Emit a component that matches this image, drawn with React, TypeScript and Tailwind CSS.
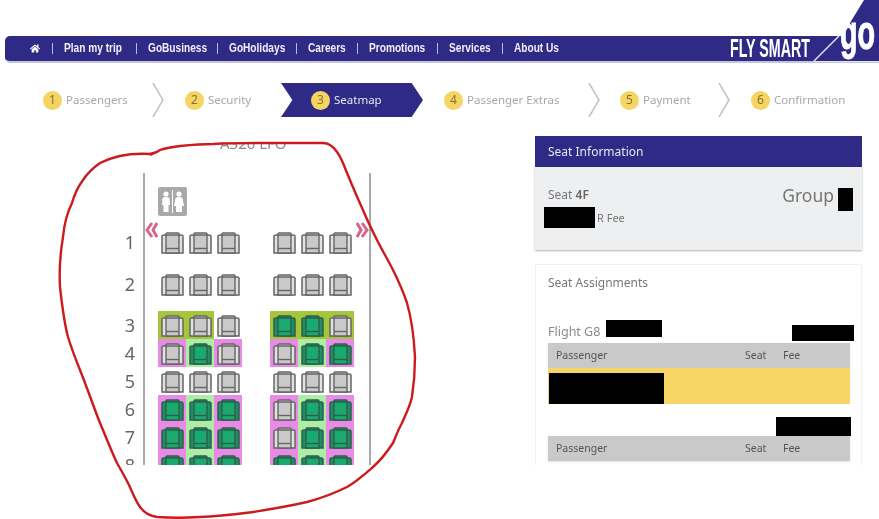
import React from "react";
import { FaHome } from "react-icons/fa";

const NAV = [
  { t: "Plan my trip", w: "w-[60px]" },
  { t: "GoBusiness", w: "w-[57px]" },
  { t: "GoHolidays", w: "w-[55px]" },
  { t: "Careers", w: "w-[37px]" },
  { t: "Promotions", w: "w-[56px]" },
  { t: "Services", w: "w-[41px]" },
  { t: "About Us", w: "w-[45px]" },
];

function Chevron() {
  return (
    <svg width="12" height="34" viewBox="0 0 12 34" className="shrink-0 blur-[0.4px]">
      <polyline points="1,0 11,17 1,34" fill="none" stroke="#c4c4c4" strokeWidth="1.6" />
    </svg>
  );
}

function Step({ n, label, active }: { n: number; label: string; active?: boolean }) {
  return (
    <div className="flex items-center gap-[4px] blur-[0.4px]">
      <div className="w-[19px] h-[19px] rounded-full bg-[#f4d462] flex items-center justify-center text-[12px] text-[#85722c] leading-none">
        {n}
      </div>
      <span className={active ? "text-[11.5px] text-[#e4e4f2] whitespace-nowrap" : "text-[11.5px] text-[#a8a8a8] whitespace-nowrap"}>
        {label}
      </span>
    </div>
  );
}

function Seat({ green }: { green?: boolean }) {
  const arm = green ? "#1f8f63" : "#e2e2e2";
  const stroke = green ? "#2f5f4c" : "#666666";
  const inner = green ? "#1aa96f" : "#c9c9c9";
  return (
    <svg width="23" height="22" viewBox="0 0 23 22" className="block blur-[0.3px]">
      <path d="M1 4 Q1 3 3 3 H5 V2 Q5 1 6 1 H17 Q18 1 18 2 V3 H20 Q22 3 22 4 V21 H1 Z" fill={arm} stroke={stroke} strokeWidth="1.5" />
      <path d="M5 3 H18 V21 H5 Z" fill={inner} stroke={stroke} strokeWidth="1.4" />
      <path d="M5 16.5 H18" stroke={stroke} strokeWidth="1.4" fill="none" />
    </svg>
  );
}

type Cell = { bg?: "o" | "p" | "l"; g?: boolean };

function SeatCell({ bg, g }: Cell) {
  const cls =
    bg === "o" ? "bg-[#a5c63b]" : bg === "p" ? "bg-[#e98ae6]" : bg === "l" ? "bg-[#aeeda6]" : "";
  return (
    <div className={`w-[28px] h-[28px] pt-[4px] pl-[3px] ${cls}`}>
      <Seat green={g} />
    </div>
  );
}

const none: Cell = {};
const PG: Cell = { bg: "p", g: true };
const PN: Cell = { bg: "p" };
const LG: Cell = { bg: "l", g: true };
const ON: Cell = { bg: "o" };
const OG: Cell = { bg: "o", g: true };

const ROWS: { n: number; cls: string; cells: Cell[] }[] = [
  { n: 1, cls: "mt-0", cells: [none, none, none, none, none, none] },
  { n: 2, cls: "mt-[14px]", cells: [none, none, none, none, none, none] },
  { n: 3, cls: "mt-[13px]", cells: [ON, ON, none, OG, OG, ON] },
  { n: 4, cls: "mt-0", cells: [PN, LG, PN, PN, LG, PG] },
  { n: 5, cls: "mt-0", cells: [none, none, none, none, none, none] },
  { n: 6, cls: "mt-0", cells: [PG, LG, PG, PN, LG, PG] },
  { n: 7, cls: "mt-0", cells: [PG, LG, PG, PN, LG, PG] },
  { n: 8, cls: "mt-0", cells: [PG, LG, PG, PG, LG, PG] },
];

function Lavatory() {
  return (
    <svg width="29" height="29" viewBox="0 0 29 29" className="block blur-[0.5px]">
      <rect width="29" height="29" rx="2" fill="#a9a9a9" />
      <line x1="14.5" y1="3" x2="14.5" y2="26" stroke="#ffffff" strokeWidth="1" />
      <circle cx="8" cy="7" r="2.6" fill="#fff" />
      <path d="M4.5 11 Q8 9 11.5 11 L12 18 H10.5 V25 H5.5 V18 H4 Z" fill="#fff" />
      <circle cx="21" cy="7" r="2.6" fill="#fff" />
      <path d="M17.5 11 Q21 9 24.5 11 L26 19 H24 V25 H18 V19 H16 Z" fill="#fff" />
    </svg>
  );
}

function Arrows({ right }: { right?: boolean }) {
  return (
    <svg width="13" height="16" viewBox="0 0 13 16" className={right ? "absolute left-[211px] top-[49px]" : "absolute left-[0px] top-[49px]"}>
      {right ? (
        <path d="M1 1 L5 8 L1 15 M6 1 L11 8 L6 15" fill="none" stroke="#d8648a" strokeWidth="3" />
      ) : (
        <path d="M7 1 L2 8 L7 15 M12 1 L8 8 L12 15" fill="none" stroke="#d8648a" strokeWidth="3" />
      )}
    </svg>
  );
}

function TableHead() {
  return (
    <div className="h-[25px] w-[302px] bg-[#c9c9c9] flex items-center text-[10.5px] text-[#555555] shadow-[0_1px_2px_rgba(0,0,0,0.12)]">
      <span className="ml-[8px] w-[189px] blur-[0.3px]">Passenger</span>
      <span className="w-[38px] blur-[0.3px]">Seat</span>
      <span className="blur-[0.3px]">Fee</span>
    </div>
  );
}

export default function App() {
  return (
    <div className="relative w-[879px] h-[519px] bg-white overflow-hidden font-['Noto_Sans',sans-serif]">
      <header className="pt-[36px] pl-[5px]">
        <nav className="h-[27px] rounded-l-[5px] bg-[#2f2a86] border-b-2 border-[#c5c4dc] flex items-center pl-[25px] gap-[11.5px] font-['Liberation_Sans',sans-serif] font-bold text-[13.5px] text-[#f0f0fa]">
          <FaHome className="w-[10px] h-[11px] text-white" />
          {NAV.map((n) => (
            <React.Fragment key={n.t}>
              <span className="w-px h-[11px] bg-[#bdbce0]" />
              <span className={`${n.w} shrink-0 blur-[0.4px]`}>
                <span className="block origin-left scale-x-[0.75] whitespace-nowrap">{n.t}</span>
              </span>
            </React.Fragment>
          ))}
        </nav>
      </header>

      <div className="mt-[20px] h-[34px] flex items-center">
        <div className="w-[152px] pl-[43px] shrink-0"><Step n={1} label="Passengers" /></div>
        <Chevron />
        <div className="w-[117px] pl-[21px] shrink-0"><Step n={2} label="Security" /></div>
        <div className="w-[142px] h-[34px] pl-[30px] shrink-0 flex items-center bg-[#2f2a86] [clip-path:polygon(0_0,92%_0,100%_50%,92%_100%,0_100%,8%_50%)]">
          <Step n={3} label="Seatmap" active />
        </div>
        <div className="w-[165px] pl-[21px] shrink-0"><Step n={4} label="Passenger Extras" /></div>
        <Chevron />
        <div className="w-[118px] pl-[20px] shrink-0"><Step n={5} label="Payment" /></div>
        <Chevron />
        <div className="pl-[21px] shrink-0"><Step n={6} label="Confirmation" /></div>
      </div>

      <main className="mt-[19px] h-[329px] overflow-hidden flex">
        <section className="w-[535px] shrink-0 pl-[120px]">
          <div className="mt-[7px] h-[7px] overflow-hidden pl-[100px]">
            <div className="-mt-[7px] text-[15px] leading-[15px] text-[#8a8a8a] whitespace-nowrap blur-[0.4px]">A320 LFO</div>
          </div>
          <div className="mt-[23px] flex">
            <div className="w-[23px] pt-[55px] shrink-0">
              {ROWS.map((r) => (
                <div key={r.n} className={`h-[28px] leading-[28px] w-[20px] text-center text-[18px] text-[#666666] blur-[0.4px] ${r.cls}`}>
                  {r.n}
                </div>
              ))}
            </div>
            <div className="relative w-[228px] h-[300px] border-x-2 border-[#a9a9a9] pl-[13px] pt-[14px]">
              <Lavatory />
              <Arrows />
              <Arrows right />
              <div className="mt-[12px]">
                {ROWS.map((r) => (
                  <div key={r.n} className={`flex ${r.cls}`}>
                    {r.cells.slice(0, 3).map((c, i) => <SeatCell key={i} {...c} />)}
                    <div className="w-[28px]" />
                    {r.cells.slice(3).map((c, i) => <SeatCell key={i} {...c} />)}
                  </div>
                ))}
              </div>
            </div>
          </div>
        </section>

        <section className="w-[327px] shrink-0 text-[#777777]">
          <div className="h-[31px] bg-[#2f2a86] flex items-center pl-[13px] text-[12px] text-[#e6e6f4]">
            <span className="blur-[0.4px]">Seat Information</span>
          </div>
          <div className="h-[83px] bg-[#eeeff1] shadow-[0_1px_2px_rgba(0,0,0,0.3)] pl-[13px] pr-[9px] flex justify-between">
            <div className="relative">
              <div className="mt-[20px] text-[12px] leading-[16px] blur-[0.4px]">Seat <b className="font-semibold text-[#666666]">4F</b></div>
              <div className="mt-[7px] text-[11px] leading-[16px] pl-[49px] blur-[0.4px]">R Fee</div>
              <div className="absolute -left-[4px] top-[40px] w-[51px] h-[21px] bg-black" />
            </div>
            <div className="flex items-start">
              <span className="mt-[15px] text-[17.5px] leading-[26px] text-[#777777] blur-[0.4px]">Group</span>
              <span className="mt-[21px] ml-[4px] w-[15px] h-[23px] bg-black" />
            </div>
          </div>

          <div className="relative mt-[14px] h-[215px] border border-[#f1f1f1] pl-[12px]">
            <div className="mt-[10px] text-[12px] leading-[16px] blur-[0.4px]">Seat Assignments</div>
            <div className="mt-[32px] flex items-center text-[12.5px] leading-[18px] text-[#8a8a8a] blur-[0.4px]">
              Flight G8
            </div>
            <div className="absolute left-[70px] top-[55px] w-[56px] h-[17px] bg-black" />
            <div className="absolute left-[256px] top-[60px] w-[62px] h-[16px] bg-black" />
            <div className="mt-[2px]"><TableHead /></div>
            <div className="w-[302px] h-[36px] bg-[#f6d465] pl-[1px] flex items-end">
              <div className="w-[115px] h-[31px] bg-black" />
            </div>
            <div className="w-[302px] h-[32px] flex justify-end items-end">
              <div className="w-[75px] h-[19px] bg-black mr-[-1px]" />
            </div>
            <TableHead />
          </div>
        </section>
      </main>

      <div className="absolute right-0 top-0 w-[79px] h-[66px] overflow-hidden">
        <svg width="79" height="66" viewBox="0 0 79 66" className="absolute left-0 top-0">
          <polygon points="42,36 64,0 79,0 79,36" fill="#2f2a86" />
          <line x1="14" y1="61" x2="39" y2="36" stroke="#e6e6f2" strokeWidth="1.4" />
          <line x1="14" y1="61.5" x2="79" y2="61.5" stroke="#e6e6f2" strokeWidth="1.2" />
        </svg>
        <span className="absolute left-[40px] top-[9px] origin-left scale-x-[0.6] font-['Liberation_Sans',sans-serif] font-bold text-[48px] leading-[48px] text-white [-webkit-text-stroke:1px_white] blur-[0.4px]">go</span>
      </div>
      <span className="absolute left-[730px] top-[35px] origin-left scale-x-[0.57] font-['Liberation_Sans',sans-serif] font-bold text-[25px] leading-[26px] text-white whitespace-nowrap blur-[0.4px]">FLY SMART</span>

      <svg width="879" height="519" viewBox="0 0 879 519" className="absolute left-0 top-0 pointer-events-none">
        <path
          d="M150 155 L157 152 L150 154 C135 153 118 154 100 163 C90 170 85 177 83 180 C77 188 74 196 72 203 C66 215 64 226 63 237 C60 255 59 270 60 287 C62 305 64 322 68 337 C72 350 76 360 80 370 C88 390 94 408 100 423 C106 437 111 450 117 463 C121 470 125 477 128 483 C132 491 135 500 140 507 C145 514 150 516 157 517 C170 518 185 518 200 517 C220 516 236 514 253 512 C272 509 290 506 307 502 C322 498 335 493 347 487 C356 482 365 474 373 467 C381 460 387 452 393 443 C396 436 398 430 402 423 C406 414 410 406 412 397 C414 384 415 370 415 357 C414 338 412 320 407 303 C403 291 398 280 393 270 C388 260 382 250 377 240 C372 230 367 220 363 210 C357 197 352 185 347 173 C344 165 341 157 337 152 C333 146 328 143 323 143 C305 143 290 143 273 143 C252 143 233 143 213 144 C202 144 190 145 180 146 C172 147 165 148 160 150 L155 153"
          fill="none"
          stroke="#cc1a1e"
          strokeWidth="2.4"
          strokeLinejoin="round"
        />
      </svg>
    </div>
  );
}
